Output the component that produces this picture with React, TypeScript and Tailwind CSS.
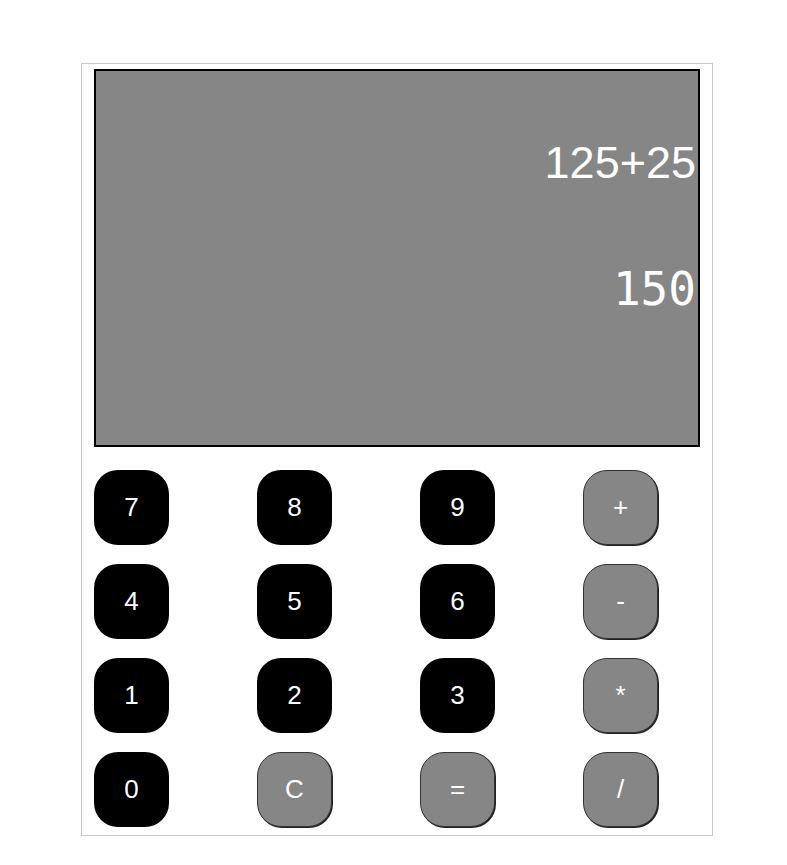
const rows = [
  ["7", "8", "9", "+"],
  ["4", "5", "6", "-"],
  ["1", "2", "3", "*"],
  ["0", "C", "=", "/"],
]

const grayKeys = ["+", "-", "*", "/", "C", "="]

export default function App() {
  return (
    <div className="min-h-screen bg-white pt-[63px]">
      <div className="ml-[81px] w-[632px] border border-[#c8c8c8] px-[12px] pt-[5px] pb-[8px]">
        <div className="flex h-[378px] flex-col items-end border-2 border-black bg-[#868686] pr-[2px] text-white">
          <div className="mt-[64px] font-['Liberation_Sans',Arial,sans-serif] text-[45px] leading-[56px]">
            125+25
          </div>
          <div className="mt-[70px] font-['DejaVu_Sans_Mono',monospace] text-[46px] leading-[56px]">150</div>
        </div>

        <div className="mt-[23px] flex flex-col gap-[19px]">
          {rows.map((row, i) => (
            <div key={i} className="flex gap-[88px]">
              {row.map((key) => {
                const gray = grayKeys.includes(key)
                return (
                  <button
                    key={key}
                    className={
                      gray
                        ? "flex h-[75px] w-[75px] items-center justify-center rounded-[24px] border border-[#333] bg-[#868686] font-['Liberation_Sans',Arial,sans-serif] text-[26px] text-white shadow-[1px_1px_0_#222]"
                        : "flex h-[75px] w-[75px] items-center justify-center rounded-[24px] bg-black font-['Liberation_Sans',Arial,sans-serif] text-[26px] text-white"
                    }
                  >
                    {key}
                  </button>
                )
              })}
            </div>
          ))}
        </div>
      </div>
    </div>
  )
}
